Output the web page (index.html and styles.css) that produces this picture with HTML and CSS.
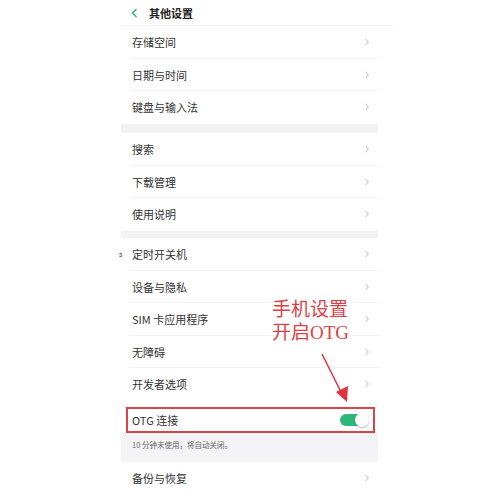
FILE: index.html
```html
<!DOCTYPE html>
<html>
<head>
  <title>其他设置</title>
  <link rel="stylesheet" href="styles.css">
</head>
<body>
  <div class="screen">
    <div class="header">
      <svg class="back" width="7" height="10" viewBox="0 0 7 10"><path d="M5.5 1 L1.5 5 L5.5 9" fill="none" stroke="#3fae8c" stroke-width="1.6"/></svg>
      <span class="title">其他设置</span>
    </div>

    <div class="group">
      <div class="row"><span>存储空间</span><i class="chev"></i></div>
      <div class="row"><span>日期与时间</span><i class="chev"></i></div>
      <div class="row last"><span>键盘与输入法</span><i class="chev"></i></div>
    </div>
    <div class="gap"></div>

    <div class="group">
      <div class="row"><span>搜索</span><i class="chev"></i></div>
      <div class="row"><span>下载管理</span><i class="chev"></i></div>
      <div class="row last"><span>使用说明</span><i class="chev"></i></div>
    </div>
    <div class="gap small"></div>

    <div class="group">
      <div class="row"><b class="mark">ɜ</b><span>定时开关机</span><i class="chev"></i></div>
      <div class="row"><span>设备与隐私</span><i class="chev"></i></div>
      <div class="row"><span>SIM 卡应用程序</span><i class="chev"></i></div>
      <div class="row"><span>无障碍</span><i class="chev"></i></div>
      <div class="row last"><span>开发者选项</span><i class="chev"></i></div>
      <div class="otg-row">
        <div class="otg-box">
          <span>OTG 连接</span>
          <span class="toggle"><span class="knob"></span></span>
        </div>
      </div>
      <div class="note">10 分钟未使用，将自动关闭。</div>
      <div class="row last"><span>备份与恢复</span><i class="chev"></i></div>
    </div>

    <div class="annotation">手机设置<br>开启OTG</div>
    <svg class="arrow" width="40" height="60" viewBox="0 0 40 60">
      <line x1="2" y1="2" x2="22" y2="42" stroke="#e0353c" stroke-width="1.6"/>
      <polygon points="16,40 27,50 28,34" fill="#e0353c"/>
    </svg>
  </div>
</body>
</html>
```

FILE: styles.css
```css
body {
  margin: 0;
  background: #fff;
  font-family: "Noto Sans CJK SC", "Liberation Sans", sans-serif;
  color: #333;
}

.screen {
  position: relative;
  margin-left: 121px;
  width: 257px;
  height: 500px;
}

.header {
  height: 26px;
  display: flex;
  align-items: center;
  padding-left: 10px;
  border-bottom: 1px solid #f3f3f3;
  box-sizing: border-box;
  margin-right: -15px;
}

.back {
  margin-right: 11px;
}

.title {
  font-size: 11px;
  font-weight: bold;
  color: #222;
}

.row {
  height: 32.5px;
  display: flex;
  align-items: center;
  padding: 0 10px 0 11px;
  font-size: 11px;
  position: relative;
  box-sizing: border-box;
}

.row::after {
  content: "";
  position: absolute;
  left: 9px;
  right: -3px;
  bottom: 0;
  height: 1px;
  background: #f3f3f3;
}

.row.last::after {
  display: none;
}

.row span {
  flex: 1;
}

.mark {
  position: absolute;
  left: -2px;
  font-size: 7px;
  font-weight: normal;
  color: #333;
}

.chev {
  width: 3px;
  height: 3px;
  border-top: 1px solid #cfcfcf;
  border-right: 1px solid #cfcfcf;
  transform: scaleY(1.3) rotate(45deg);
}

.gap {
  height: 9.5px;
  background: #f2f2f2;
}

.gap.small {
  height: 7.5px;
}

.otg-row {
  height: 32.5px;
  padding: 6px 3px 0 5px;
  box-sizing: border-box;
}

.otg-box {
  height: 26px;
  border: 2px solid #d9444a;
  box-sizing: border-box;
  display: flex;
  align-items: center;
  padding: 0 5px 0 4px;
  font-size: 11px;
}

.otg-box span:first-child {
  flex: 1;
}

.toggle {
  position: relative;
  width: 28px;
  height: 12px;
  border-radius: 6px;
  background: #2fb77b;
}

.knob {
  position: absolute;
  right: -1px;
  top: -1px;
  width: 14px;
  height: 14px;
  border-radius: 50%;
  background: #fff;
  box-shadow: 0 1px 2px rgba(0,0,0,0.3);
}

.note {
  height: 29px;
  background: #f4f3f5;
  font-size: 7.5px;
  color: #666;
  padding: 6px 0 0 11px;
  box-sizing: border-box;
}

.annotation {
  position: absolute;
  left: 151px;
  top: 298px;
  font-family: "Liberation Serif", "Noto Sans CJK SC", serif;
  font-size: 19px;
  line-height: 23px;
  color: #dd3f46;
}

.arrow {
  position: absolute;
  left: 199px;
  top: 352px;
}
```
